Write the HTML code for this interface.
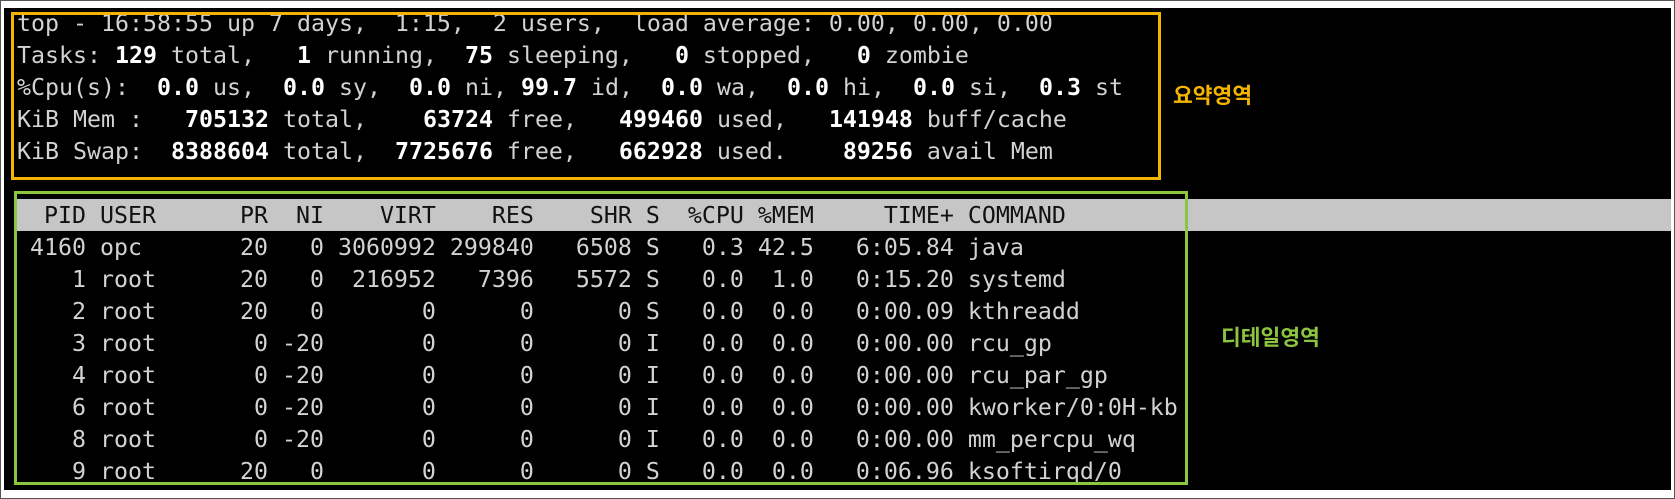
<!DOCTYPE html>
<html><head><meta charset="utf-8"><style>
html,body{margin:0;padding:0;background:#fff;width:1675px;height:499px;overflow:hidden;position:relative}
#outer{position:absolute;left:0;top:0;width:1673px;height:497px;border:1px solid #555;background:#fff}
#term{position:absolute;left:4px;top:8px;width:1667px;height:482px;background:#000}
.l{position:absolute;white-space:pre;font-family:"DejaVu Sans Mono","Liberation Mono",monospace;font-size:23.25px;line-height:32px;height:32px;color:#d2d2d2}
.l b{color:#fff;font-weight:bold}
#bar{position:absolute;left:17px;top:199px;width:1654px;height:32px;background:#c6c6c6}
#ybox{position:absolute;left:11px;top:12px;width:1144px;height:162px;border:3px solid #f5b400}
#gbox{position:absolute;left:14px;top:191px;width:1168px;height:288px;border:3px solid #8cc63f}
.k{position:absolute;font-family:"Noto Sans CJK KR","NanumGothic",sans-serif;font-weight:bold;font-size:21.5px;line-height:26px;white-space:nowrap}
</style></head><body>
<div id="outer"></div>
<div id="term"></div>
<div id="bar"></div>
<div class="l" style="left:17px;top:8px">top - 16:58:55 up 7 days,  1:15,  2 users,  load average: 0.00, 0.00, 0.00</div>
<div class="l" style="left:17px;top:40px">Tasks: <b>129</b> total,   <b>1</b> running,  <b>75</b> sleeping,   <b>0</b> stopped,   <b>0</b> zombie</div>
<div class="l" style="left:17px;top:72px">%Cpu(s):  <b>0.0</b> us,  <b>0.0</b> sy,  <b>0.0</b> ni, <b>99.7</b> id,  <b>0.0</b> wa,  <b>0.0</b> hi,  <b>0.0</b> si,  <b>0.3</b> st</div>
<div class="l" style="left:17px;top:104px">KiB Mem :   <b>705132</b> total,    <b>63724</b> free,   <b>499460</b> used,   <b>141948</b> buff/cache</div>
<div class="l" style="left:17px;top:136px">KiB Swap:  <b>8388604</b> total,  <b>7725676</b> free,   <b>662928</b> used.    <b>89256</b> avail Mem</div>
<div class="l" style="left:16px;top:200px;color:#111">  PID USER      PR  NI    VIRT    RES    SHR S  %CPU %MEM     TIME+ COMMAND</div>
<div class="l" style="left:16px;top:232px"> 4160 opc       20   0 3060992 299840   6508 S   0.3 42.5   6:05.84 java</div>
<div class="l" style="left:16px;top:264px">    1 root      20   0  216952   7396   5572 S   0.0  1.0   0:15.20 systemd</div>
<div class="l" style="left:16px;top:296px">    2 root      20   0       0      0      0 S   0.0  0.0   0:00.09 kthreadd</div>
<div class="l" style="left:16px;top:328px">    3 root       0 -20       0      0      0 I   0.0  0.0   0:00.00 rcu_gp</div>
<div class="l" style="left:16px;top:360px">    4 root       0 -20       0      0      0 I   0.0  0.0   0:00.00 rcu_par_gp</div>
<div class="l" style="left:16px;top:392px">    6 root       0 -20       0      0      0 I   0.0  0.0   0:00.00 kworker/0:0H-kb</div>
<div class="l" style="left:16px;top:424px">    8 root       0 -20       0      0      0 I   0.0  0.0   0:00.00 mm_percpu_wq</div>
<div class="l" style="left:16px;top:456px">    9 root      20   0       0      0      0 S   0.0  0.0   0:06.96 ksoftirqd/0</div>
<div id="ybox"></div>
<div id="gbox"></div>
<div class="k" style="left:1173px;top:82px;color:#f5b400">요약영역</div>
<div class="k" style="left:1221px;top:324px;color:#8cc63f">디테일영역</div>
</body></html>
